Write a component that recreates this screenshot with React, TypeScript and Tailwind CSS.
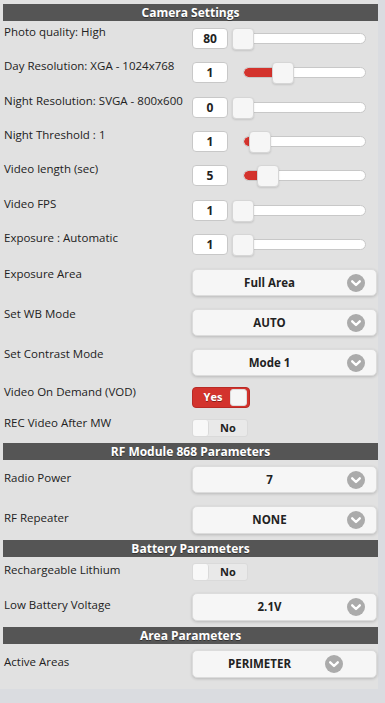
import React from "react";

const FONT = { fontFamily: '"Open Sans", "Noto Sans", Arial, sans-serif' };

function Header({ title }: { title: string }) {
  return (
    <div className="h-[17px] bg-[#555555] text-white font-bold text-[12px] leading-[17px] text-center [text-shadow:0_1px_0_#333]">
      {title}
    </div>
  );
}

function ChevronCircle() {
  return (
    <svg width="18" height="18" viewBox="0 0 18 18">
      <circle cx="9" cy="9" r="9" fill="#ababab" />
      <path d="M5.2 7.3 L9 11 L12.8 7.3" stroke="#fff" strokeWidth="2.4" fill="none" strokeLinecap="round" strokeLinejoin="round" />
    </svg>
  );
}

function SliderRow({
  label,
  value,
  rowH,
  thumbLeft,
  red,
}: {
  label: string;
  value: string;
  rowH: string;
  thumbLeft: number;
  red: boolean;
}) {
  const center = thumbLeft + 11;
  return (
    <div className={`flex ${rowH}`}>
      <div className="w-[189px] pl-[1px] pt-[3px] text-[11.5px] leading-[16px] text-[#222]">{label}</div>
      <div className="pt-[7px] flex items-start">
        <div className="w-[36px] h-[21px] bg-white border border-[#c8c8c8] rounded-[4px] flex items-center justify-center text-[12px] font-bold text-[#222]">
          {value}
        </div>
        <div className="relative ml-[4px] w-[134px] h-[22px]">
          <div className="absolute left-[11px] right-0 top-[5px] h-[11px] bg-white border border-[#c8c8c8] rounded-full overflow-hidden">
            {red && (
              <div className="h-full bg-[#d3332d] rounded-l-full" style={{ width: center - 11 }} />
            )}
          </div>
          <div
            className="absolute top-0 w-[22px] h-[22px] bg-[#f6f6f6] border border-[#d6d6d6] rounded-[4px] shadow-[0_1px_2px_rgba(0,0,0,0.12)]"
            style={{ left: thumbLeft }}
          />
        </div>
      </div>
    </div>
  );
}

function SelectRow({
  label,
  value,
  rowH,
  labelPt,
  ctrlPt,
  selH,
  wide,
}: {
  label: string;
  value: string;
  rowH: string;
  labelPt: string;
  ctrlPt: string;
  selH: string;
  wide?: boolean;
}) {
  return (
    <div className={`flex ${rowH}`}>
      <div className={`w-[189px] pl-[1px] ${labelPt} text-[11.5px] leading-[16px] text-[#222]`}>{label}</div>
      <div className={ctrlPt}>
        <div
          className={`relative w-[185px] ${selH} bg-[#f6f6f6] border border-[#dcdcdc] rounded-[5px] shadow-[0_1px_3px_rgba(0,0,0,0.18)] flex items-center justify-center ${
            wide ? "pr-[50px]" : "pr-[30px]"
          } text-[11.5px] font-bold text-[#222]`}
        >
          {value}
          <div className={`absolute top-1/2 -translate-y-1/2 flex ${wide ? "right-[33px]" : "right-[11px]"}`}>
            <ChevronCircle />
          </div>
        </div>
      </div>
    </div>
  );
}

function ToggleRow({
  label,
  on,
  rowH,
  labelPt,
  ctrlPt,
}: {
  label: string;
  on: boolean;
  rowH: string;
  labelPt: string;
  ctrlPt: string;
}) {
  return (
    <div className={`flex ${rowH}`}>
      <div className={`w-[189px] pl-[1px] ${labelPt} text-[11.5px] leading-[16px] text-[#222]`}>{label}</div>
      <div className={ctrlPt}>
        {on ? (
          <div className="relative w-[58px] h-[21px] bg-[#d3332d] border border-[#b82a25] rounded-[4px] flex items-center">
            <span className="w-[40px] text-center text-white font-bold text-[11px] [text-shadow:0_1px_0_#8a1f1b]">Yes</span>
            <div className="absolute right-[2px] top-[1px] w-[17px] h-[17px] bg-[#f6f6f6] border border-[#dcdcdc] rounded-[3px]" />
          </div>
        ) : (
          <div className="relative w-[56px] h-[18px] bg-[#e9e9e9] border border-[#dadada] rounded-[3px] flex items-center">
            <div className="w-[16px] h-full bg-[#f8f8f8] border-r border-[#dadada] rounded-[3px]" />
            <span className="flex-1 text-center text-[#222] font-bold text-[11px]">No</span>
          </div>
        )}
      </div>
    </div>
  );
}

export default function App() {
  return (
    <div className="w-[385px] min-h-[703px] bg-[#dadce0]" style={FONT}>
      <div className="w-[378px] bg-[#e1e1e1] pl-[3px] pt-[4px] pb-[5px]">
        <Header title="Camera Settings" />
        <SliderRow label="Photo quality: High" value="80" rowH="h-[34px]" thumbLeft={0} red={false} />
        <SliderRow label="Day Resolution: XGA - 1024x768" value="1" rowH="h-[35px]" thumbLeft={40} red={true} />
        <SliderRow label="Night Resolution: SVGA - 800x600" value="0" rowH="h-[34px]" thumbLeft={0} red={false} />
        <SliderRow label="Night Threshold : 1" value="1" rowH="h-[34px]" thumbLeft={17} red={true} />
        <SliderRow label="Video length (sec)" value="5" rowH="h-[35px]" thumbLeft={25} red={true} />
        <SliderRow label="Video FPS" value="1" rowH="h-[34px]" thumbLeft={0} red={false} />
        <SliderRow label="Exposure : Automatic" value="1" rowH="h-[35px]" thumbLeft={0} red={false} />
        <SelectRow label="Exposure Area" value="Full Area" rowH="h-[40px]" labelPt="pt-[4px]" ctrlPt="pt-[7px]" selH="h-[27px]" />
        <SelectRow label="Set WB Mode" value="AUTO" rowH="h-[40px]" labelPt="pt-[4px]" ctrlPt="pt-[7px]" selH="h-[27px]" />
        <SelectRow label="Set Contrast Mode" value="Mode 1" rowH="h-[40px]" labelPt="pt-[4px]" ctrlPt="pt-[7px]" selH="h-[27px]" />
        <ToggleRow label="Video On Demand (VOD)" on={true} rowH="h-[31px]" labelPt="pt-[2px]" ctrlPt="pt-[5px]" />
        <ToggleRow label="REC Video After MW" on={false} rowH="h-[30px]" labelPt="pt-[2px]" ctrlPt="pt-[6px]" />
        <Header title="RF Module 868 Parameters" />
        <SelectRow label="Radio Power" value="7" rowH="h-[40px]" labelPt="pt-[10px]" ctrlPt="pt-[6px]" selH="h-[27px]" />
        <SelectRow label="RF Repeater" value="NONE" rowH="h-[40px]" labelPt="pt-[10px]" ctrlPt="pt-[6px]" selH="h-[28px]" />
        <Header title="Battery Parameters" />
        <ToggleRow label="Rechargeable Lithium" on={false} rowH="h-[30px]" labelPt="pt-[5px]" ctrlPt="pt-[6px]" />
        <SelectRow label="Low Battery Voltage" value="2.1V" rowH="h-[40px]" labelPt="pt-[10px]" ctrlPt="pt-[6px]" selH="h-[28px]" />
        <Header title="Area Parameters" />
        <SelectRow label="Active Areas" value="PERIMETER" rowH="h-[40px]" labelPt="pt-[10px]" ctrlPt="pt-[6px]" selH="h-[28px]" wide />
      </div>
    </div>
  );
}
